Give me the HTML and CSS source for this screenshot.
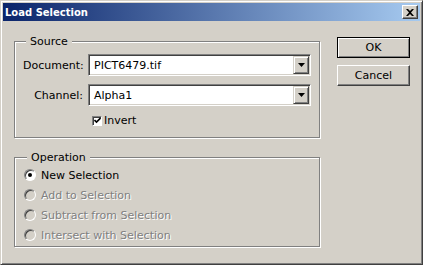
FILE: index.html
```html
<!DOCTYPE html>
<html lang="en">
<head>
    <meta charset="UTF-8">
    <title>Load Selection</title>
    <link rel="stylesheet" href="styles.css">
</head>
<body>
    <div class="window">
        <div class="titlebar">
            <span class="title">Load Selection</span>
            <span class="close-btn">
                <svg width="8" height="7" viewBox="0 0 8 7">
                    <path d="M0 0h2l2 2 2-2h2L5 3.5 8 7H6L4 5 2 7H0l3-3.5z" fill="#000"/>
                </svg>
            </span>
        </div>
        <div class="content">
            <div class="left-col">
                <fieldset class="group source">
                    <legend>Source</legend>
                    <div class="row">
                        <label class="field-label">Document:</label>
                        <div class="combo">
                            <span class="combo-text">PICT6479.tif</span>
                            <span class="combo-btn">
                                <svg width="7" height="4" viewBox="0 0 7 4"><path d="M0 0h7L3.5 4z" fill="#000"/></svg>
                            </span>
                        </div>
                    </div>
                    <div class="row">
                        <label class="field-label">Channel:</label>
                        <div class="combo">
                            <span class="combo-text">Alpha1</span>
                            <span class="combo-btn">
                                <svg width="7" height="4" viewBox="0 0 7 4"><path d="M0 0h7L3.5 4z" fill="#000"/></svg>
                            </span>
                        </div>
                    </div>
                    <div class="check-row">
                        <span class="checkbox">
                            <svg width="7" height="7" viewBox="0 0 7 7"><path d="M0.5 3l2 2 4-4" fill="none" stroke="#000" stroke-width="1.6"/></svg>
                        </span>
                        <span>Invert</span>
                    </div>
                </fieldset>
                <fieldset class="group operation">
                    <legend>Operation</legend>
                    <div class="radio-row">
                        <span class="radio checked"></span>
                        <span>New Selection</span>
                    </div>
                    <div class="radio-row disabled">
                        <span class="radio"></span>
                        <span>Add to Selection</span>
                    </div>
                    <div class="radio-row disabled">
                        <span class="radio"></span>
                        <span>Subtract from Selection</span>
                    </div>
                    <div class="radio-row disabled">
                        <span class="radio"></span>
                        <span>Intersect with Selection</span>
                    </div>
                </fieldset>
            </div>
            <div class="buttons">
                <button class="btn default">OK</button>
                <button class="btn">Cancel</button>
            </div>
        </div>
    </div>
</body>
</html>
```

FILE: styles.css
```css
body {
    margin: 0;
    padding: 0;
    font-family: "DejaVu Sans", sans-serif;
    font-size: 11px;
    color: #000;
    background-color: #d4d0c8;
}
.window {
    width: 423px;
    height: 265px;
    box-sizing: border-box;
    border: 1px solid;
    border-color: #d4d0c8 #404040 #404040 #d4d0c8;
    box-shadow: inset 1px 1px 0 #fff, inset -1px -1px 0 #808080;
    padding: 2px;
    background-color: #d4d0c8;
}
.titlebar {
    height: 18px;
    display: flex;
    align-items: center;
    justify-content: space-between;
    padding-left: 2px;
    background: linear-gradient(to right, #0a246a, #a6caf0);
}
.title {
    color: #fff;
    font-weight: bold;
    font-size: 10px;
}
.close-btn {
    width: 16px;
    height: 14px;
    box-sizing: border-box;
    margin-right: 2px;
    display: flex;
    align-items: center;
    justify-content: center;
    background-color: #d4d0c8;
    border: 1px solid;
    border-color: #fff #404040 #404040 #fff;
    box-shadow: inset -1px -1px 0 #808080;
}
.content {
    display: flex;
    align-items: flex-start;
    padding: 14px 0 0 11px;
}
.left-col {
    width: 306px;
}
.group {
    margin: 0;
    width: 306px;
    box-sizing: border-box;
    min-width: 0;
    border: 1px solid #808080;
    box-shadow: 1px 1px 0 #fff, inset 1px 1px 0 #fff;
}
.group legend {
    margin-left: 3px;
    padding: 0 4px;
    line-height: 13px;
    background-color: #d4d0c8;
}
.source {
    padding: 6px 0 10px 8px;
}
.operation {
    margin-top: 13px;
    padding: 1px 0 1px 9px;
}
.row {
    display: flex;
    align-items: center;
    margin-bottom: 8px;
}
.field-label {
    width: 60px;
    margin-right: 5px;
    text-align: right;
}
.combo {
    width: 223px;
    height: 22px;
    box-sizing: border-box;
    display: flex;
    padding: 1px;
    background-color: #fff;
    border: 1px solid;
    border-color: #808080 #fff #fff #808080;
    box-shadow: inset 1px 1px 0 #404040, inset -1px -1px 0 #d4d0c8;
}
.combo-text {
    flex: 1;
    display: flex;
    align-items: center;
    padding-left: 4px;
}
.combo-btn {
    width: 16px;
    box-sizing: border-box;
    display: flex;
    align-items: center;
    justify-content: center;
    background-color: #d4d0c8;
    border: 1px solid;
    border-color: #d4d0c8 #404040 #404040 #d4d0c8;
    box-shadow: inset 1px 1px 0 #fff, inset -1px -1px 0 #808080;
}
.check-row {
    display: flex;
    align-items: center;
    margin-left: 69px;
}
.checkbox {
    width: 10px;
    height: 10px;
    box-sizing: border-box;
    margin-right: 2px;
    display: flex;
    align-items: center;
    justify-content: center;
    background-color: #fff;
    border: 1px solid;
    border-color: #808080 #fff #fff #808080;
    box-shadow: inset 1px 1px 0 #404040;
}
.radio-row {
    height: 20px;
    display: flex;
    align-items: center;
}
.radio {
    width: 12px;
    height: 12px;
    box-sizing: border-box;
    margin-right: 5px;
    border-radius: 50%;
    border: 1px solid;
    border-color: #808080 #fff #fff #808080;
    box-shadow: inset 1px 1px 0 #404040;
    background-color: #fff;
    display: flex;
    align-items: center;
    justify-content: center;
}
.radio.checked::after {
    content: "";
    width: 4px;
    height: 4px;
    border-radius: 50%;
    background-color: #000;
}
.disabled {
    color: #808080;
    text-shadow: 1px 1px 0 #fff;
}
.disabled .radio {
    background-color: #d4d0c8;
}
.buttons {
    display: flex;
    flex-direction: column;
    gap: 7px;
    margin-left: 17px;
    padding-top: 2px;
}
.btn {
    width: 73px;
    height: 21px;
    box-sizing: border-box;
    padding: 0;
    font-family: "DejaVu Sans", sans-serif;
    font-size: 11px;
    color: #000;
    background-color: #d4d0c8;
    border: 1px solid;
    border-color: #fff #404040 #404040 #fff;
    box-shadow: inset -1px -1px 0 #808080;
}
.btn.default {
    border-color: #000;
    box-shadow: inset 1px 1px 0 #fff, inset -1px -1px 0 #808080;
}
```
